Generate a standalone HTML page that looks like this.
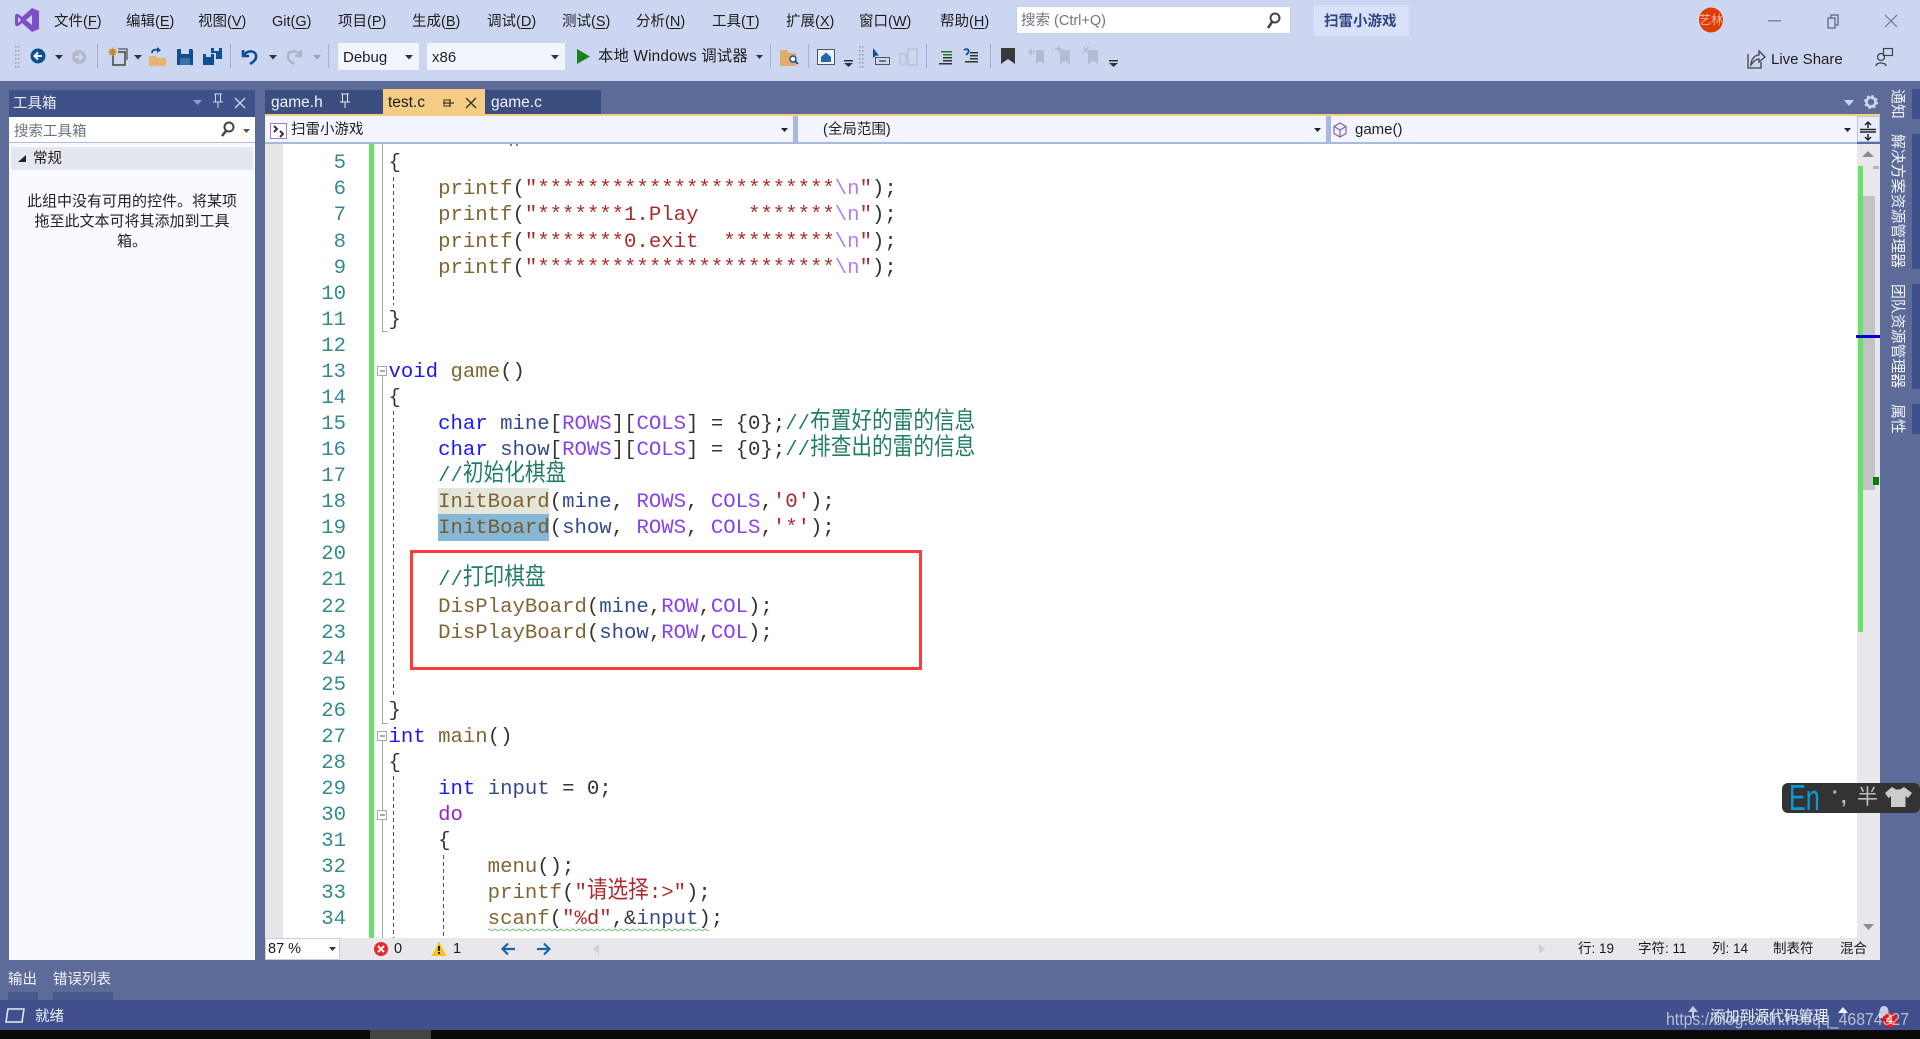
<!DOCTYPE html>
<html lang="zh">
<head>
<meta charset="utf-8">
<title>扫雷小游戏</title>
<style>
html,body{margin:0;padding:0;width:1920px;height:1039px;overflow:hidden;background:#5d6b98}
body{position:relative;font-family:"Liberation Sans","Noto Sans CJK SC",sans-serif;font-size:14.5px;color:#1e1e1e}
.b{position:absolute}
.t{position:absolute;white-space:pre;line-height:20px;margin-top:1px}
.m{position:absolute;top:12px;white-space:pre;line-height:20px;font-size:14.5px;color:#1e1e1e}
.m u{text-underline-offset:2px}
.n{position:absolute;left:300px;width:46px;text-align:right;height:26px;margin-top:2px;font:20.67px/26px "Liberation Mono",monospace;color:#1f7d80;opacity:.9}
.c{position:absolute;left:388.5px;height:26px;margin-top:2px;white-space:pre;font:20.67px/26px "Liberation Mono","Noto Sans CJK SC",monospace;color:#1e1e1e;opacity:.9}
.c i{font-style:normal}
.k{color:#0000ff}.f{color:#74531f}.s{color:#a31515}.p{color:#7a2df0}.v{color:#1f377f}.e{color:#a970f0}.o{color:#8f08c4}
.g{color:#0b7058}
.z{display:inline-block;font-size:20.67px;line-height:26px;transform:scale(1,1.15) translateY(-1px)}
.sb{position:absolute;top:939px;line-height:20px;font-size:13.5px;color:#1a1a1a;white-space:pre}
.vt{position:absolute;left:1889px;writing-mode:vertical-rl;text-orientation:sideways;font-size:14.9px;line-height:16px;color:#f2f4fb;white-space:pre}
</style>
</head>
<body>
<!-- chrome backgrounds -->
<div class="b" style="left:0;top:0;width:1920px;height:81px;background:#ccd6f0"></div>
<div class="b" style="left:0;top:81px;width:1920px;height:919px;background:#5d6b98"></div>
<div class="b" style="left:0;top:1000px;width:1920px;height:30px;background:#40508c"></div>
<div class="b" style="left:0;top:1030px;width:1920px;height:9px;background:#0b0a08"></div>
<div class="b" style="left:370px;top:1030px;width:61px;height:9px;background:#444542"></div>

<!-- menu -->
<svg class="b" style="left:0;top:0" width="1920" height="81" viewBox="0 0 1920 81">
<path fill="#7d4fc4" fill-rule="evenodd" d="M32 8L39 11V29L32 32L22 23L17.5 26.5L15 25V15L17.5 13.5L22 17ZM32 15L26 20L32 25ZM18 17V23L21 20Z"/>
<!-- grip -->
<g fill="#8e99b8"><rect x="15" y="46" width="1.5" height="1.5"/><rect x="18" y="46" width="1.5" height="1.5"/><rect x="15" y="50" width="1.5" height="1.5"/><rect x="18" y="50" width="1.5" height="1.5"/><rect x="15" y="54" width="1.5" height="1.5"/><rect x="18" y="54" width="1.5" height="1.5"/><rect x="15" y="58" width="1.5" height="1.5"/><rect x="18" y="58" width="1.5" height="1.5"/><rect x="15" y="62" width="1.5" height="1.5"/><rect x="18" y="62" width="1.5" height="1.5"/><rect x="15" y="66" width="1.5" height="1.5"/><rect x="18" y="66" width="1.5" height="1.5"/>
<rect x="859" y="46" width="1.5" height="1.5"/><rect x="862" y="46" width="1.5" height="1.5"/><rect x="859" y="50" width="1.5" height="1.5"/><rect x="862" y="50" width="1.5" height="1.5"/><rect x="859" y="54" width="1.5" height="1.5"/><rect x="862" y="54" width="1.5" height="1.5"/><rect x="859" y="58" width="1.5" height="1.5"/><rect x="862" y="58" width="1.5" height="1.5"/><rect x="859" y="62" width="1.5" height="1.5"/><rect x="862" y="62" width="1.5" height="1.5"/><rect x="859" y="66" width="1.5" height="1.5"/><rect x="862" y="66" width="1.5" height="1.5"/></g>
<!-- separators -->
<g fill="#a5b1d0"><rect x="97" y="44" width="1" height="24"/><rect x="230" y="44" width="1" height="24"/><rect x="328" y="44" width="1" height="24"/><rect x="770" y="44" width="1" height="24"/><rect x="808" y="44" width="1" height="24"/><rect x="926" y="44" width="1" height="24"/><rect x="990" y="44" width="1" height="24"/></g>
<!-- back / forward -->
<circle cx="38" cy="56" r="7.5" fill="#0e4f8f"/><path d="M42 56H35M38 52.5L34.5 56L38 59.5" stroke="#fff" stroke-width="2" fill="none"/>
<circle cx="79" cy="57" r="7" fill="#b3b8c8"/><path d="M75 57H82M79 53.5L82.5 57L79 60.5" stroke="#ccd6f0" stroke-width="2" fill="none"/>
<g fill="#333"><path d="M55 55H63L59 59.5Z"/><path d="M134 55H142L138 59.5Z"/><path d="M269 55H277L273 59.5Z"/></g>
<path d="M313 55H321L317 59.5Z" fill="#9aa2b8"/>
<!-- new item -->
<path d="M113 54V65H125V52H118" fill="none" stroke="#444" stroke-width="1.5"/><path d="M118 49H127V60" fill="none" stroke="#555" stroke-width="1.3"/>
<path d="M112.500 47l1 2.500 2.500-1-1 2.500 2.500 1-2.500 1 1 2.500-2.500-1-1 2.500-1-2.500-2.500 1 1-2.500-2.500-1 2.500-1-1-2.500 2.500 1z" fill="#c88a20"/>
<!-- open -->
<path d="M149 66V56H156L158 58H166V66Z" fill="#e4b56f"/><path d="M152 53C152 50 155 49 159 50" fill="none" stroke="#0e4f8f" stroke-width="1.8"/><path d="M157 47L161 50L157 53Z" fill="#0e4f8f"/>
<!-- save -->
<path d="M177 49H192L193 50V65H177Z" fill="#0e4f8f"/><rect x="181" y="49" width="8" height="5" fill="#ccd6f0"/><rect x="180" y="58" width="10" height="7" fill="#ccd6f0" opacity=".25"/>
<path d="M203 54H214V65H203Z" fill="#0e4f8f"/><path d="M211 48H222V59H216V53H211Z" fill="#0e4f8f"/><rect x="206" y="54" width="5" height="3" fill="#ccd6f0"/><rect x="214" y="48" width="5" height="3" fill="#ccd6f0"/>
<!-- undo / redo -->
<path d="M243 50V56H249M244 55C248 49 257 51 256 57C256 60 253 62 250 64" fill="none" stroke="#0e4f8f" stroke-width="2.6"/>
<path d="M301 50V56H295M300 55C296 49 287 51 288 57C288 60 291 62 294 64" fill="none" stroke="#aeb5c8" stroke-width="2.6"/>
<!-- debug arrow, play -->
<path d="M577 49L590 56.5L577 64Z" fill="#1e7f1e"/><path d="M756 55H763L759.5 59Z" fill="#333"/>
<!-- find in files -->
<path d="M780 66V50H787L789 53H796V66Z" fill="#dfae69"/><circle cx="793" cy="59" r="3" fill="#fff" stroke="#0e4f8f" stroke-width="1.4"/><path d="M795 61L798 64" stroke="#0e4f8f" stroke-width="1.6"/>
<!-- home -->
<rect x="817.500" y="49.500" width="17" height="15" fill="#eef1f9" stroke="#555"/><path d="M821 57L826 52.500L831 57V62H821Z" fill="#1b6ca8"/>
<rect x="844" y="60" width="9" height="1.500" fill="#333"/><path d="M844 63H853L848.500 67Z" fill="#333"/>
<path d="M873 48V58L876 55.500L879 55.500Z" fill="#0e4f8f"/><rect x="875.500" y="57.500" width="14" height="7" fill="#ccd6f0" stroke="#555"/><rect x="879" y="60" width="7" height="2" fill="#777"/>
<path d="M900 54H906V64H900ZM908 49H917V65H908Z" fill="none" stroke="#bac2d4" stroke-width="1.5"/>
<!-- comment -->
<g fill="#333"><rect x="941" y="51" width="11" height="1.500" fill="#1e7f1e"/><rect x="943" y="54" width="9" height="1.500" fill="#1e7f1e"/><rect x="943" y="57" width="9" height="1.500"/><rect x="943" y="60" width="9" height="1.500"/><rect x="939" y="63" width="13" height="1.500"/></g>
<path d="M964 50C967 48 970 50 968 53L966 55" fill="none" stroke="#0e4f8f" stroke-width="1.8"/><g fill="#333"><rect x="970" y="52" width="8" height="1.500"/><rect x="970" y="55" width="8" height="1.500"/><rect x="970" y="58" width="8" height="1.500"/><rect x="965" y="61" width="13" height="1.500"/></g>
<!-- bookmarks -->
<path d="M1001 48H1015V64L1008 59L1001 64Z" fill="#3a3a3a"/>
<g fill="#b4bcd0"><path d="M1036 50H1044V64L1040 61L1036 64Z"/><path d="M1060 50H1070V64L1065 61L1060 64Z"/><path d="M1088 50H1098V64L1093 61L1088 64Z"/></g>
<path d="M1035 52H1029M1032 49L1029 52L1032 55M1055 49H1061M1058 46.500L1061 49L1058 52M1083 47L1089 53M1089 47L1083 53" stroke="#b4bcd0" stroke-width="1.600" fill="none"/>
<rect x="1109" y="60" width="9" height="1.500" fill="#333"/><path d="M1109 63H1118L1113.500 67Z" fill="#333"/>
<!-- search, avatar, caption -->
<rect x="1016.500" y="6.500" width="274" height="27" fill="#fff" stroke="#c5cee4"/>
<circle cx="1275" cy="18" r="4.500" fill="none" stroke="#444" stroke-width="2"/><path d="M1272 22L1268 28" stroke="#444" stroke-width="2.600"/>
<rect x="1314" y="5" width="95" height="31" fill="#d9e1f8"/>
<ellipse cx="1711" cy="20" rx="12" ry="12.500" fill="#e03c05"/>
<rect x="1768" y="20" width="13" height="1.500" fill="#7d88a5"/>
<path d="M1828 18H1835V28H1828ZM1831 18V15H1838V25H1835" fill="none" stroke="#5a6786" stroke-width="1.300"/>
<path d="M1885 15L1897 27M1897 15L1885 27" stroke="#6a7590" stroke-width="1.200"/>
<!-- live share -->
<path d="M1748 54V68H1761V62" fill="none" stroke="#444" stroke-width="1.300"/><path d="M1751 65C1751 59 1755 55 1759 55V51L1765 57L1759 62V59C1756 59 1753 62 1751 65Z" fill="none" stroke="#444" stroke-width="1.300"/>
<circle cx="1881" cy="57" r="3.500" fill="none" stroke="#444" stroke-width="1.300"/><path d="M1876 66C1876 62 1886 62 1886 66" fill="none" stroke="#444" stroke-width="1.300"/><rect x="1883.500" y="48.500" width="9" height="7" fill="none" stroke="#444" stroke-width="1.200"/>
</svg>

<div class="m" style="left:54px">文件(<u>F</u>)</div>
<div class="m" style="left:126px">编辑(<u>E</u>)</div>
<div class="m" style="left:198px">视图(<u>V</u>)</div>
<div class="m" style="left:272px">Git(<u>G</u>)</div>
<div class="m" style="left:338px">项目(<u>P</u>)</div>
<div class="m" style="left:412px">生成(<u>B</u>)</div>
<div class="m" style="left:487px">调试(<u>D</u>)</div>
<div class="m" style="left:562px">测试(<u>S</u>)</div>
<div class="m" style="left:636px">分析(<u>N</u>)</div>
<div class="m" style="left:712px">工具(<u>T</u>)</div>
<div class="m" style="left:786px">扩展(<u>X</u>)</div>
<div class="m" style="left:859px">窗口(<u>W</u>)</div>
<div class="m" style="left:940px">帮助(<u>H</u>)</div>
<div class="t" style="left:1021px;top:10px;color:#6f7684;font-size:14.5px">搜索 (Ctrl+Q)</div>
<div class="t" style="left:1324px;top:11px;color:#2f4580;font-size:14.5px;font-weight:700">扫雷小游戏</div>
<div class="t" style="left:1699px;top:9px;color:#f7b99f;font-size:12px">艺林</div>

<div class="b" style="left:338px;top:43px;width:81px;height:27px;background:#f2f5fe"></div>
<div class="b" style="left:427px;top:43px;width:138px;height:27px;background:#f2f5fe"></div>
<svg class="b" style="left:0;top:40px" width="600" height="32"><path d="M405 15H413L409 19.500Z" fill="#333"/><path d="M551 15H559L555 19.500Z" fill="#333"/></svg>
<div class="t" style="left:343px;top:47px;font-size:15px">Debug</div>
<div class="t" style="left:432px;top:47px;font-size:15px">x86</div>
<div class="t" style="left:598px;top:46px;font-size:15.3px;letter-spacing:.2px">本地 Windows 调试器</div>
<div class="t" style="left:1771px;top:49px;font-size:15px">Live Share</div>

<!-- toolbox -->
<div class="b" style="left:9px;top:90px;width:246px;height:27px;background:#3f5189"></div>
<div class="b" style="left:9px;top:117px;width:246px;height:26px;background:#fff;border-bottom:1px solid #aebbdc;box-sizing:border-box"></div>
<div class="b" style="left:9px;top:143px;width:246px;height:817px;background:#f8faff"></div>
<div class="b" style="left:11px;top:147px;width:242px;height:23px;background:#e5e7f0"></div>
<div class="t" style="left:13px;top:93px;color:#e8ecf8;font-size:14.5px">工具箱</div>
<div class="t" style="left:14px;top:121px;color:#6e7480;font-size:14.5px">搜索工具箱</div>
<div class="t" style="left:33px;top:148px;font-size:14.5px">常规</div>
<div class="t" style="left:9px;width:246px;top:191px;text-align:center;font-size:15px;color:#222">此组中没有可用的控件。将某项</div>
<div class="t" style="left:9px;width:246px;top:211px;text-align:center;font-size:15px;color:#222">拖至此文本可将其添加到工具</div>
<div class="t" style="left:9px;width:246px;top:231px;text-align:center;font-size:15px;color:#222">箱。</div>

<!-- tabs -->
<div class="b" style="left:265px;top:90px;width:118px;height:24px;background:#3c4d80"></div>
<div class="b" style="left:383px;top:89px;width:102px;height:25px;background:#f5cc84"></div>
<div class="b" style="left:485px;top:90px;width:116px;height:24px;background:#3c4d80"></div>
<div class="b" style="left:265px;top:114px;width:1615px;height:2px;background:#f5cc84"></div>
<div class="t" style="left:271px;top:92px;color:#f0f3fb;font-size:15.5px">game.h</div>
<div class="t" style="left:388px;top:92px;color:#1e1e1e;font-size:15.5px">test.c</div>
<div class="t" style="left:491px;top:92px;color:#f0f3fb;font-size:15.5px">game.c</div>

<!-- nav bar -->
<div class="b" style="left:265px;top:116px;width:1592px;height:26px;background:#f2f5fe"></div>
<div class="b" style="left:793px;top:116px;width:5px;height:26px;background:#a9b8de"></div>
<div class="b" style="left:1326px;top:116px;width:5px;height:26px;background:#a9b8de"></div>
<div class="b" style="left:1857px;top:116px;width:23px;height:26px;background:#e8edfa;box-sizing:border-box;border:1px solid #bac6e4"></div>
<div class="b" style="left:265px;top:142px;width:1592px;height:2px;background:#a9b8de"></div>
<div class="t" style="left:291px;top:119px;font-size:14.5px">扫雷小游戏</div>
<div class="t" style="left:823px;top:119px;font-size:14.5px">(全局范围)</div>
<div class="t" style="left:1355px;top:119px;font-size:15px">game()</div>

<!-- editor -->
<div class="b" style="left:265px;top:144px;width:18px;height:794px;background:#e6e7e8"></div>
<div class="b" style="left:283px;top:144px;width:1574px;height:794px;background:#fff"></div>
<div class="b" style="left:1857px;top:144px;width:23px;height:794px;background:#e8e8ec"></div>
<div class="b" style="left:1863px;top:196px;width:12px;height:294px;background:#c2c3c9"></div>
<div class="b" style="left:1858px;top:166px;width:5px;height:466px;background:#6be06b"></div>
<div class="b" style="left:1856px;top:335px;width:24px;height:3px;background:#0000c8"></div>
<div class="b" style="left:1873px;top:477px;width:6px;height:8px;background:#008000"></div>
<div class="b" style="left:1873px;top:166px;width:6px;height:3px;background:#b5b5b8"></div>
<div class="b" style="left:369px;top:144px;width:5px;height:794px;background:#6bdf6b"></div>
<div class="b" style="left:438px;top:488px;width:111px;height:26px;background:#e3e6d8"></div>
<div class="b" style="left:438px;top:514px;width:111px;height:27px;background:#87b7d6"></div>

<svg class="b" style="left:0;top:0" width="1920" height="1039" viewBox="0 0 1920 1039">
<defs><pattern id="w" width="6" height="4" patternUnits="userSpaceOnUse"><path d="M0 3L3 1L6 3" fill="none" stroke="#6cc06c" stroke-width="1"/></pattern></defs>
<path d="M511 144V146M517 144V146" stroke="#555" stroke-width="1.500"/>
<!-- fold -->
<g fill="none" stroke="#a8a8a8" stroke-width="1">
<path d="M382.500 144V331.500H388"/>
<path d="M382.500 376V723.500H388"/>
<path d="M382.500 741V810M382.500 820V938"/>
<rect x="377.500" y="366.500" width="9" height="9" fill="#fff"/>
<rect x="377.500" y="731.500" width="9" height="9" fill="#fff"/>
<rect x="377.500" y="810.500" width="9" height="9" fill="#fff"/>
<path d="M380 371H385M380 736H385M380 815H385" stroke="#555"/>
</g>
<g stroke="#555" stroke-width="1" stroke-dasharray="4 3" fill="none">
<path d="M393.500 177V305"/><path d="M393.500 411V695"/><path d="M393.500 776V938"/><path d="M443.500 855V938"/>
</g>
<rect x="488" y="927" width="221" height="4" fill="url(#w)"/>
<!-- nav icons -->
<rect x="270.500" y="123.500" width="16" height="15" fill="#fff" stroke="#b07bb8"/><path d="M274 126l3 3-3 3M280 131l3 3-3 3" stroke="#333" stroke-width="2" fill="none"/>
<path d="M1340 123L1346 126.500V133.500L1340 137L1334 133.500V126.500ZM1334 126.500L1340 130L1346 126.500M1340 130V137" fill="none" stroke="#8a5cb8" stroke-width="1.200"/>
<g fill="#222"><path d="M781 128H788L784.500 132Z"/><path d="M1314 128H1321L1317.500 132Z"/><path d="M1844 128H1851L1847.500 132Z"/></g>
<path d="M1860 129.500H1876" stroke="#222" stroke-width="1.500"/><path d="M1860 132H1876" stroke="#222" stroke-width="1.500"/><path d="M1868 122V128M1868 134V140" stroke="#222" stroke-width="1.500"/><path d="M1865 125L1868 122L1871 125M1865 137L1868 140L1871 137" stroke="#222" stroke-width="1.500" fill="none"/>
<!-- tab icons -->
<path d="M341 94H349M342.500 94V102H347.500V94M345 102V108M340 102H350" stroke="#e8ecf8" fill="none"/>
<path d="M443 103H450M450 99V107M450 103H454" stroke="#3c3220" stroke-width="1.300" fill="none"/><rect x="444" y="100" width="6" height="6" fill="none" stroke="#3c3220"/>
<path d="M466 98L476 108M476 98L466 108" stroke="#3c3220" stroke-width="1.400"/>
<path d="M1844 100H1854L1849 106Z" fill="#ccd6f0"/>
<circle cx="1871" cy="102" r="4.500" fill="none" stroke="#ccd6f0" stroke-width="2.600"/><circle cx="1871" cy="102" r="6.300" fill="none" stroke="#ccd6f0" stroke-width="1.500" stroke-dasharray="2.500 2.500"/>
<path d="M193 100H202L197.500 105Z" fill="#8fa0cf"/>
<path d="M214 94H222M215.500 94V102H220.500V94M218 102V108M213 102H223" stroke="#cfd6ea" fill="none"/>
<path d="M235 98L245 108M245 98L235 108" stroke="#cfd6ea" stroke-width="1.300"/>
<!-- toolbox icons -->
<circle cx="229" cy="127" r="4.500" fill="none" stroke="#444" stroke-width="2"/><path d="M226 131L222 136" stroke="#444" stroke-width="2.600"/>
<path d="M243 129H250L246.500 133Z" fill="#555"/>
<path d="M26 155V162H18Z" fill="#222"/>
<!-- scroll arrows -->
<path d="M1862 157L1868 151L1874 157Z" fill="#8a8d98"/><path d="M1863 924L1868.500 930L1874 924Z" fill="#8a8d98"/>
<!-- red box -->
<rect x="411.500" y="551.500" width="509" height="117" fill="none" stroke="#ff3b3b" stroke-width="3"/>
<!-- editor status -->
<rect x="265" y="938" width="1615" height="22" fill="#e8e8ec"/>
<rect x="265.500" y="938.500" width="74" height="21" fill="#fff" stroke="#c2cde6"/>
<path d="M329 947H336L332.500 951Z" fill="#333"/>
<circle cx="381" cy="949" r="7" fill="#e8282c"/><path d="M378 946L384 952M384 946L378 952" stroke="#fff" stroke-width="2"/>
<path d="M439 941.500L446.500 956H431.500Z" fill="#f5c518"/><rect x="438" y="946" width="2" height="5" fill="#222"/><rect x="438" y="952" width="2" height="2" fill="#222"/>
<path d="M515 949H503M508 943.500L502.500 949L508 954.500" fill="none" stroke="#1c63a8" stroke-width="2.200"/>
<path d="M537 949H549M544 943.500L549.500 949L544 954.500" fill="none" stroke="#1c63a8" stroke-width="2.200"/>
<path d="M599 944V954L593 949Z" fill="#cfd0d6"/><path d="M1539 944V954L1545 949Z" fill="#cfd0d6"/>
<!-- bottom tabs -->
<rect x="8" y="992" width="30" height="8" fill="#475a8c"/><rect x="53" y="992" width="60" height="8" fill="#475a8c"/>
<path d="M8 1009H24L22 1022H6Z" fill="none" stroke="#e8ecf8" stroke-width="1.500"/>
<!-- status bar icons -->
<path d="M1692 1018L1692 1012L1688 1012L1693 1006L1698 1012L1694 1012V1018Z" fill="#c6cde0"/>
<path d="M1838 1013L1843 1007L1848 1013Z" fill="#f2f4fb"/>
<path d="M1879 1018C1879 1008 1881 1006 1884 1006C1887 1006 1889 1008 1889 1018Z" fill="#c6cde0"/>
<circle cx="1890" cy="1020" r="7.500" fill="#e81818"/>
<!-- right side dark bars -->
<g fill="#40508c"><rect x="1912" y="89" width="8" height="30"/><rect x="1912" y="134" width="8" height="135"/><rect x="1912" y="284" width="8" height="105"/><rect x="1912" y="404" width="8" height="30"/></g>
</svg>

<!-- line numbers -->
<div class="n" style="top:149.300px">5</div><div class="n" style="top:175.400px">6</div><div class="n" style="top:201.400px">7</div><div class="n" style="top:227.500px">8</div><div class="n" style="top:253.600px">9</div><div class="n" style="top:279.600px">10</div><div class="n" style="top:305.700px">11</div><div class="n" style="top:331.800px">12</div><div class="n" style="top:357.900px">13</div><div class="n" style="top:383.900px">14</div><div class="n" style="top:410px">15</div><div class="n" style="top:436.100px">16</div><div class="n" style="top:462.100px">17</div><div class="n" style="top:488.200px">18</div><div class="n" style="top:514.300px">19</div><div class="n" style="top:540.400px">20</div><div class="n" style="top:566.400px">21</div><div class="n" style="top:592.500px">22</div><div class="n" style="top:618.600px">23</div><div class="n" style="top:644.600px">24</div><div class="n" style="top:670.700px">25</div><div class="n" style="top:696.800px">26</div><div class="n" style="top:722.900px">27</div><div class="n" style="top:748.900px">28</div><div class="n" style="top:775px">29</div><div class="n" style="top:801.100px">30</div><div class="n" style="top:827.100px">31</div><div class="n" style="top:853.200px">32</div><div class="n" style="top:879.300px">33</div><div class="n" style="top:905.400px">34</div>

<!-- code -->
<div class="c" style="top:149.300px">{</div>
<div class="c" style="top:175.400px">    <i class="f">printf</i>(<i class="s">"************************</i><i class="e">\n</i><i class="s">"</i>);</div>
<div class="c" style="top:201.400px">    <i class="f">printf</i>(<i class="s">"*******1.Play    *******</i><i class="e">\n</i><i class="s">"</i>);</div>
<div class="c" style="top:227.500px">    <i class="f">printf</i>(<i class="s">"*******0.exit  *********</i><i class="e">\n</i><i class="s">"</i>);</div>
<div class="c" style="top:253.600px">    <i class="f">printf</i>(<i class="s">"************************</i><i class="e">\n</i><i class="s">"</i>);</div>
<div class="c" style="top:305.700px">}</div>
<div class="c" style="top:357.900px"><i class="k">void</i> <i class="f">game</i>()</div>
<div class="c" style="top:383.900px">{</div>
<div class="c" style="top:410px">    <i class="k">char</i> <i class="v">mine</i>[<i class="p">ROWS</i>][<i class="p">COLS</i>] = {0};<i class="g">//<span class="z">布置好的雷的信息</span></i></div>
<div class="c" style="top:436.100px">    <i class="k">char</i> <i class="v">show</i>[<i class="p">ROWS</i>][<i class="p">COLS</i>] = {0};<i class="g">//<span class="z">排查出的雷的信息</span></i></div>
<div class="c" style="top:462.100px">    <i class="g">//<span class="z">初始化棋盘</span></i></div>
<div class="c" style="top:488.200px">    <i class="f">InitBoard</i>(<i class="v">mine</i>, <i class="p">ROWS</i>, <i class="p">COLS</i>,<i class="s">'0'</i>);</div>
<div class="c" style="top:514.300px">    <i class="f">InitBoard</i>(<i class="v">show</i>, <i class="p">ROWS</i>, <i class="p">COLS</i>,<i class="s">'*'</i>);</div>
<div class="c" style="top:566.400px">    <i class="g">//<span class="z">打印棋盘</span></i></div>
<div class="c" style="top:592.500px">    <i class="f">DisPlayBoard</i>(<i class="v">mine</i>,<i class="p">ROW</i>,<i class="p">COL</i>);</div>
<div class="c" style="top:618.600px">    <i class="f">DisPlayBoard</i>(<i class="v">show</i>,<i class="p">ROW</i>,<i class="p">COL</i>);</div>
<div class="c" style="top:696.800px">}</div>
<div class="c" style="top:722.900px"><i class="k">int</i> <i class="f">main</i>()</div>
<div class="c" style="top:748.900px">{</div>
<div class="c" style="top:775px">    <i class="k">int</i> <i class="v">input</i> = 0;</div>
<div class="c" style="top:801.100px">    <i class="o">do</i></div>
<div class="c" style="top:827.100px">    {</div>
<div class="c" style="top:853.200px">        <i class="f">menu</i>();</div>
<div class="c" style="top:879.300px">        <i class="f">printf</i>(<i class="s">"<span class="z">请选择</span>:&gt;"</i>);</div>
<div class="c" style="top:905.400px">        <i class="f">scanf</i>(<i class="s">"%d"</i>,&amp;<i class="v">input</i>);</div>

<!-- editor status text -->
<div class="sb" style="left:268px;font-size:14.5px">87 %</div>
<div class="sb" style="left:394px;font-size:14.5px">0</div>
<div class="sb" style="left:453px;font-size:14.5px">1</div>
<div class="sb" style="left:1578px">行: 19</div>
<div class="sb" style="left:1638px">字符: 11</div>
<div class="sb" style="left:1712px">列: 14</div>
<div class="sb" style="left:1773px">制表符</div>
<div class="sb" style="left:1840px">混合</div>

<!-- side tabs -->
<div class="vt" style="top:89px">通知</div>
<div class="vt" style="top:134px">解决方案资源管理器</div>
<div class="vt" style="top:284px">团队资源管理器</div>
<div class="vt" style="top:404px">属性</div>

<!-- bottom -->
<div class="t" style="left:8px;top:969px;color:#f0f3fb;font-size:14.5px">输出</div>
<div class="t" style="left:53px;top:969px;color:#f0f3fb;font-size:14.5px">错误列表</div>
<div class="t" style="left:35px;top:1006px;color:#f0f3fb;font-size:14.5px">就绪</div>
<div class="t" style="left:1710px;top:1006px;color:#f0f3fb;font-size:14.8px">添加到源代码管理</div>
<div class="t" style="left:1666px;top:1008px;color:rgba(225,230,240,.72);font-size:17.5px;transform:scaleX(.905);transform-origin:left center">https://blog.csdn.net/qq_46874327</div>
<div class="t" style="left:1886px;top:1009px;color:#fff;font-size:13px">4</div>

<!-- IME -->
<div class="b" style="left:1782px;top:783px;width:138px;height:30px;background:#333;border-radius:6px"></div>
<div class="t" style="left:1789px;top:782px;margin:0;line-height:32px;color:#0a9ad8;font-size:36px;transform:scaleX(.7);transform-origin:left center">En</div>
<div class="t" style="left:1832px;top:781px;margin:0;line-height:24px;color:#bbb;font-size:20px;font-weight:700">·</div>
<div class="t" style="left:1841px;top:785px;margin:0;line-height:24px;color:#bbb;font-size:20px;font-weight:700">,</div>
<div class="t" style="left:1857px;top:783px;margin:0;line-height:30px;color:#bbb;font-size:21px">半</div>
<svg class="b" style="left:1885px;top:787px" width="28" height="24"><path d="M7 0L11 2.500H15L19 0L27 6L23 11L20.500 9V20H6V9L3.500 11L0 6Z" fill="#ccc"/></svg>
</body>
</html>
